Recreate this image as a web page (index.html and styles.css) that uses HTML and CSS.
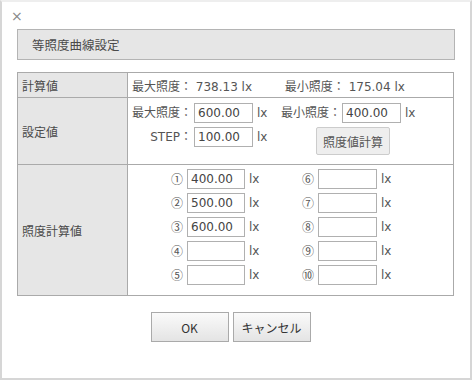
FILE: index.html
```html
<!DOCTYPE html>
<html lang="ja">
<head>
    <meta charset="UTF-8">
    <title>等照度曲線設定</title>
    <link rel="stylesheet" href="styles.css">
</head>
<body>
    <div class="dialog">
        <div class="close">×</div>
        <div class="title">等照度曲線設定</div>

        <table class="form">
            <tr class="row-result">
                <th>計算値</th>
                <td>
                    <span class="result">最大照度： 738.13 lx</span>
                    <span class="result">最小照度： 175.04 lx</span>
                </td>
            </tr>
            <tr class="row-setting">
                <th>設定値</th>
                <td>
                    <div class="setting">
                        <span class="lbl">最大照度：</span>
                        <input type="text" value="600.00">
                        <span class="unit">lx</span>
                        <span class="lbl">最小照度：</span>
                        <input type="text" value="400.00">
                        <span class="unit">lx</span>

                        <span class="lbl">STEP：</span>
                        <input type="text" value="100.00">
                        <span class="unit">lx</span>
                        <button class="calc-btn">照度値計算</button>
                    </div>
                </td>
            </tr>
            <tr class="row-values">
                <th>照度計算値</th>
                <td>
                    <div class="values">
                        <span class="num">①</span><input type="text" value="400.00"><span class="unit">lx</span>
                        <span class="num">⑥</span><input type="text"><span class="unit">lx</span>
                        <span class="num">②</span><input type="text" value="500.00"><span class="unit">lx</span>
                        <span class="num">⑦</span><input type="text"><span class="unit">lx</span>
                        <span class="num">③</span><input type="text" value="600.00"><span class="unit">lx</span>
                        <span class="num">⑧</span><input type="text"><span class="unit">lx</span>
                        <span class="num">④</span><input type="text"><span class="unit">lx</span>
                        <span class="num">⑨</span><input type="text"><span class="unit">lx</span>
                        <span class="num">⑤</span><input type="text"><span class="unit">lx</span>
                        <span class="num">⑩</span><input type="text"><span class="unit">lx</span>
                    </div>
                </td>
            </tr>
        </table>

        <div class="actions">
            <button class="btn">OK</button>
            <button class="btn">キャンセル</button>
        </div>
    </div>
</body>
</html>
```

FILE: styles.css
```css
* {
    margin: 0;
    padding: 0;
    box-sizing: border-box;
}

body {
    background: #fff;
    font-family: 'DejaVu Sans', 'Noto Sans CJK JP', sans-serif;
    font-size: 12px;
    color: #555;
}

.dialog {
    width: 472px;
    height: 380px;
    border: 2px solid #d6d6d6;
    border-top-color: #eee;
    padding: 6px 15px 0;
}

.close {
    height: 21px;
    margin-left: -6px;
    font-size: 14px;
    line-height: 16px;
    color: #888;
}

.title {
    height: 31px;
    background: #e6e6e6;
    border: 1px solid #b4b4b4;
    padding-left: 14px;
    line-height: 29px;
    font-family: 'Noto Sans CJK JP', sans-serif;
    font-size: 12.5px;
    color: #4a4a4a;
}

.form {
    width: 437px;
    margin-top: 12px;
    border-collapse: collapse;
}

.form th, .form td {
    border: 1px solid #aaa;
}

.form th {
    width: 110px;
    background: #e6e6e6;
    text-align: left;
    font-weight: normal;
    padding-left: 4px;
    font-family: 'Noto Sans CJK JP', sans-serif;
    color: #4a4a4a;
}

.row-result th, .row-result td {
    height: 25px;
}

.row-result td {
    padding-left: 4px;
}

.result {
    display: inline-block;
    width: 149px;
    white-space: nowrap;
}

.row-setting th, .row-setting td {
    height: 67px;
}

.row-setting td {
    vertical-align: top;
    padding: 5px 0 0 4px;
}

.setting {
    display: grid;
    grid-template-columns: 62px 59px 28px 61px 59px auto;
    row-gap: 4px;
    align-items: start;
}

.lbl {
    text-align: right;
    padding-right: 2px;
    line-height: 20px;
    white-space: nowrap;
}

.unit {
    padding-left: 4px;
    line-height: 20px;
}

input {
    width: 59px;
    height: 20px;
    border: 1px solid #b0b0b0;
    padding: 0 3px;
    font-family: inherit;
    font-size: 12px;
    color: #444;
    background: #fff;
}

.calc-btn {
    grid-column: 4 / 7;
    justify-self: start;
    margin-left: 35px;
    width: 74px;
    height: 28px;
    border: 1px solid #ccc;
    border-radius: 2px;
    background: #eee;
    font-family: 'Noto Sans CJK JP', sans-serif;
    font-size: 12px;
    color: #555;
}

.row-values th, .row-values td {
    height: 131px;
}

.row-values td {
    vertical-align: top;
    padding: 4px 0 0 43px;
}

.values {
    display: grid;
    grid-template-columns: 16px 58px 57px 16px 59px auto;
    row-gap: 4px;
}

.values input {
    width: 58px;
}

.values input:nth-of-type(2n) {
    width: 59px;
}

.num {
    line-height: 20px;
    font-family: 'Noto Sans CJK JP', sans-serif;
    font-size: 12px;
    color: #555;
}

.actions {
    display: flex;
    justify-content: center;
    gap: 4px;
    margin-top: 16px;
    padding-right: 11px;
}

.btn {
    width: 78px;
    height: 30px;
    border: 1px solid #aaa;
    background: linear-gradient(#fafafa, #e4e4e4);
    font-family: 'Noto Sans CJK JP', sans-serif;
    font-size: 12px;
    color: #333;
}
```
